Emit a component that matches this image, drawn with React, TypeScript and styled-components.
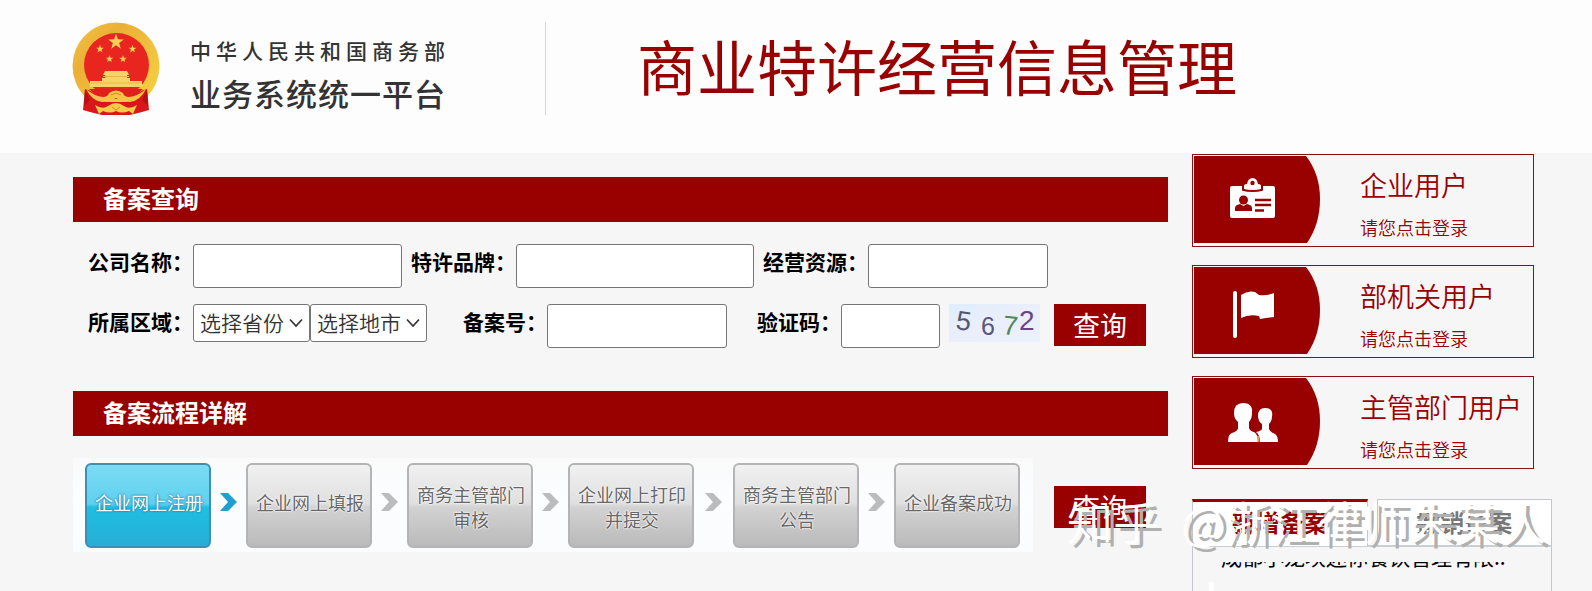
import React from "react";
import styled, { createGlobalStyle, css } from "styled-components";

const RED = "#990000";

const GlobalStyle = createGlobalStyle`
  *, *::before, *::after { box-sizing: border-box; }
  html, body { margin: 0; }
  body {
    background: #f6f6f6;
    color: #000;
    font-family: "Noto Sans CJK SC", "Noto Sans", sans-serif;
  }
  h1, h2, p { margin: 0; font-weight: 400; }
  button, input, select { font: inherit; margin: 0; }
  a { color: inherit; text-decoration: none; }
`;

const Page = styled.div`
  position: relative;
  display: flex;
  flex-direction: column;
  min-height: 100vh;
  overflow: hidden;
`;

const Header = styled.header`
  display: flex;
  align-items: flex-start;
  height: 153px;
  padding: 22px 40px 0 72px;
  background: #fdfdfd;
`;

const Brand = styled.div`
  display: flex;
  width: 474px;
  height: 93px;
  border-right: 1px solid #d4d4d4;
`;

const BrandText = styled.div`
  padding: 14px 0 0 30px;
  color: #333;
  white-space: nowrap;
`;

const Ministry = styled.p`
  font-size: 21px;
  line-height: 28px;
  letter-spacing: 5px;
  font-weight: 500;
`;

const Platform = styled.p`
  margin-top: 7px;
  font-size: 31px;
  line-height: 44px;
  letter-spacing: 1px;
  font-weight: 500;
`;

const SiteTitle = styled.h1`
  margin-left: 91px;
  color: ${RED};
  font-size: 60px;
  line-height: 86px;
  white-space: nowrap;
`;

const Content = styled.div`
  display: flex;
  flex: 1;
  gap: 24px;
  padding: 0 40px 0 73px;
`;

const Main = styled.main`
  flex: 1;
  min-width: 0;
  padding-top: 24px;
`;

const SectionTitle = styled.h2`
  padding: 0 0 3px 30px;
  background: ${RED};
  color: #fff;
  font-size: 24px;
  font-weight: 700;
  line-height: 42px;
`;

const Form = styled.form`
  display: flex;
  flex-direction: column;
  gap: 16px;
  padding: 22px 0 43px 15px;
`;

const FormRow = styled.div`
  display: flex;
  align-items: flex-start;
  gap: 9px;
`;

const Field = styled.div<{ $before?: number }>`
  display: flex;
  align-items: flex-start;
  margin-left: ${(p) => p.$before ?? 0}px;
`;

const Label = styled.label`
  font-size: 21px;
  font-weight: 700;
  line-height: 34px;
  white-space: nowrap;
`;

const control = css`
  border: 1px solid #767676;
  border-radius: 3px;
  background: #fff;
`;

const TextInput = styled.input<{ $width: number }>`
  ${control}
  width: ${(p) => p.$width}px;
  height: 44px;
  padding: 0 8px;
  font-size: 21px;
`;

const SelectBox = styled.span`
  position: relative;
  display: block;
  width: 117px;

  svg {
    position: absolute;
    top: 14px;
    right: 7px;
    pointer-events: none;
  }
`;

const Select = styled.select`
  ${control}
  appearance: none;
  width: 100%;
  height: 38px;
  padding: 0 24px 3px 6px;
  color: #333;
  font-size: 21px;
  font-weight: 350;
`;

const Captcha = styled.svg`
  display: block;
  flex: none;
`;

const QueryButton = styled.button`
  flex: none;
  width: 92px;
  height: 42px;
  padding: 0;
  border: 0;
  background: ${RED};
  color: #fff;
  font-size: 27px;
  line-height: 42px;
`;

const SubmitSlot = styled.div`
  margin-left: 5px;
`;

const Flow = styled.div`
  display: flex;
  align-items: flex-start;
  gap: 21px;
  padding-top: 22px;
`;

const FlowAction = styled.div`
  padding-top: 28px;
`;

const Steps = styled.ol`
  display: flex;
  align-items: center;
  margin: 0;
  padding: 5px 13px 5px 12px;
  height: 94px;
  list-style: none;
  background: linear-gradient(#fafafa, #fbfdff 40%, #fbfcfd);
`;

const Step = styled.li`
  display: flex;
  align-items: center;
`;

const StepBox = styled.span<{ $active?: boolean; $double?: boolean }>`
  display: flex;
  align-items: center;
  justify-content: center;
  width: 126px;
  height: 85px;
  padding: ${(p) => (p.$double ? "4px 0 0 2px" : "0 0 5px 2px")};
  border: 2px solid ${(p) => (p.$active ? "#3d8fb3" : "#b4b4b6")};
  border-radius: 6px;
  background: ${(p) =>
    p.$active
      ? "linear-gradient(#7cdcf4, #5fd0ef 48%, #1fbfe2 52%, #27add6)"
      : "linear-gradient(#f1f1f1, #dfdfdf 48%, #d2d2d2 52%, #bababa)"};
  color: ${(p) => (p.$active ? "#fff" : "#666")};
  font-size: 18px;
  line-height: 25px;
  text-align: center;
  white-space: pre-line;
  text-shadow: ${(p) =>
    p.$active
      ? "0 0 2px #1f7fa5, 0 0 2px #1f7fa5"
      : "0 0 2px #fff, 0 0 2px #fff, 0 0 1px #fff"};
`;

const StepArrow = styled.svg<{ $wide?: boolean }>`
  display: block;
  margin: ${(p) => (p.$wide ? "0 11px 6px 10px" : "0 9px 6px 8px")};
`;

const Sidebar = styled.aside`
  display: flex;
  flex-direction: column;
  flex: none;
  width: 360px;
  padding-top: 1px;
`;

const Logins = styled.div`
  display: flex;
  flex-direction: column;
  gap: 18px;
  margin-right: 18px;
`;

const LoginCard = styled.a`
  display: flex;
  align-items: flex-start;
  height: 93px;
  padding: 1px;
  border: 1px solid #8a1018;
  color: ${RED};
  white-space: nowrap;
`;

const LoginText = styled.span`
  display: flex;
  flex-direction: column;
  padding: 9px 0 0 40px;
  font-weight: 350;
`;

const LoginName = styled.span`
  font-size: 27px;
  line-height: 40px;
`;

const LoginHint = styled.span`
  margin-top: 9px;
  font-size: 18px;
  line-height: 26px;
`;

const News = styled.section`
  display: flex;
  flex: 1;
  flex-direction: column;
  margin-top: 30px;
`;

const Tabs = styled.div`
  display: flex;
`;

const Tab = styled.button<{ $active?: boolean }>`
  flex: 1;
  height: 48px;
  padding: ${(p) => (p.$active ? "0 0 4px" : "0 0 2px")};
  border: 1px solid #c3c7cb;
  border-top: ${(p) => (p.$active ? `3px solid ${RED}` : "1px solid #c3c7cb")};
  border-bottom: ${(p) => (p.$active ? "1px" : "2px")} solid #c9d0d5;
  background: #fff;
  color: ${(p) => (p.$active ? RED : "#777")};
  font-size: 24px;
  font-weight: 700;
  line-height: 36px;
`;

const TabGap = styled.span`
  width: 9px;
  border-bottom: 2px solid #c9d0d5;
`;

const NewsPanel = styled.div`
  flex: 1;
  padding: 15px 16px 0;
  border: 1px solid #c3c7cb;
  border-width: 0 1px;
`;

const Ticker = styled.div`
  display: flex;
  flex-direction: column;
  justify-content: flex-end;
  height: 12px;
  padding-left: 12px;
  overflow: hidden;
`;

const TickerItem = styled.a`
  flex: none;
  font-size: 21px;
  line-height: 35px;
  white-space: nowrap;
`;

const ScrollMark = styled.div`
  width: 5px;
  height: 9px;
  margin-top: 8px;
  background: #fff;
`;

const Watermark = styled.div`
  position: absolute;
  right: 46px;
  bottom: 41px;
  display: flex;
  gap: 22px;
  color: #fff;
  font-size: 46px;
  font-weight: 350;
  line-height: 60px;
  white-space: nowrap;
  text-shadow: 5px 4px 0 #b0b0b0;
  pointer-events: none;
`;

const starPoints = (cx: number, cy: number, r: number) =>
  Array.from({ length: 10 }, (_, i) => {
    const a = -Math.PI / 2 + (i * Math.PI) / 5;
    const d = i % 2 ? r * 0.4 : r;
    return `${(cx + d * Math.cos(a)).toFixed(2)},${(cy + d * Math.sin(a)).toFixed(2)}`;
  }).join(" ");

function Emblem() {
  return (
    <svg width="88" height="93" viewBox="0 0 88 93" role="img" aria-label="国徽">
      <defs>
        <linearGradient id="gold" x1="0" y1="0" x2="1" y2="1">
          <stop offset="0" stopColor="#f5c548" />
          <stop offset=".3" stopColor="#eab036" />
          <stop offset=".7" stopColor="#f3c640" />
          <stop offset="1" stopColor="#f7cf3a" />
        </linearGradient>
      </defs>
      <circle cx="44" cy="44" r="43.5" fill="url(#gold)" />
      <ellipse cx="44.5" cy="43" rx="32.5" ry="32" fill="#e8251f" />
      <path
        d="M13 67 Q21 69 27 75 L34 80 H54 L61 75 Q67 69 75 67 L77 88 L70 90 L58 93 H30 L18 90 L11 88 Z"
        fill="#d9171b"
      />
      <path d="M13 67 L18 78 L12 84 Z M75 67 L70 78 L76 84 Z" fill="#b80f14" />
      <g fill="#f5cf58">
        <polygon points={starPoints(44, 20, 8.2)} />
        <polygon points={starPoints(28, 27, 4.2)} />
        <polygon points={starPoints(60.5, 27, 4.2)} />
        <polygon points={starPoints(37.5, 37, 4)} />
        <polygon points={starPoints(51, 37, 4)} />
      </g>
      <path
        d="M33 49 H55 L57 53 H55 V56 H58 V59 H70 V65 H18 V59 H30 V56 H33 V53 H31 Z"
        fill="#f7d46a"
      />
      <path d="M31 54.5 H57 M19 61 H69" stroke="#edb63e" strokeWidth="1" />
      <path d="M17 67 H71 L60 77 H28 Z" fill="#df201d" />
      <path
        d="M14 67 Q22 74 31 75 Q36 75 37 71 Q44 66 51 71 Q52 75 57 75 Q66 74 74 67 Q68 79 58 80 Q50 80 44 76 Q38 80 30 80 Q20 79 14 67 Z"
        fill="#f3c545"
      />
      <path
        d="M23 83 Q31 88 36 84 Q44 78 52 84 Q57 88 65 83 L61 92 L57 89 Q50 92 44 89 Q38 92 31 89 L27 92 Z"
        fill="#f5cb4a"
      />
      <path d="M40 85 l4 3 4 -3 M39 73 l5 -2 5 2" stroke="#d98b22" fill="none" />
    </svg>
  );
}

function Chevron() {
  return (
    <svg width="14" height="10" viewBox="0 0 14 10" aria-hidden="true">
      <path d="M1 1.5 L7 8 L13 1.5" fill="none" stroke="#333" strokeWidth="1.7" />
    </svg>
  );
}

function CaptchaImage() {
  return (
    <Captcha width="91" height="38" viewBox="0 0 91 38" role="img" aria-label="验证码图片">
      <defs>
        <linearGradient id="captcha" x1="0" y1="0" x2="1" y2="1">
          <stop offset="0" stopColor="#dfeefc" />
          <stop offset=".5" stopColor="#ebeefb" />
          <stop offset="1" stopColor="#eaf1fd" />
        </linearGradient>
      </defs>
      <rect width="91" height="38" fill="url(#captcha)" />
      <g fontFamily="'Liberation Sans', sans-serif" fontSize="27">
        <text transform="translate(6 25) rotate(8)" fill="#55566f">5</text>
        <text x="32" y="31" fontSize="25" fill="#5b5578">6</text>
        <text transform="translate(53 30) rotate(6)" fill="#4f8a5c">7</text>
        <text x="70" y="26" fontSize="28" fill="#6a4585">2</text>
      </g>
    </Captcha>
  );
}

const badgeIcons: Record<string, React.ReactNode> = {
  card: (
    <>
      <rect x="36" y="30" width="45" height="32" rx="2" fill="#fff" />
      <path
        d="M50 33 V30 Q50 28 53 28 Q54 22 58.5 22 Q63 22 64 28 Q67 28 67 30 V33 Q64 34 58.5 34 Q53 34 50 33 Z"
        fill="#fff"
        stroke={RED}
        strokeWidth="4"
        paintOrder="stroke"
      />
      <circle cx="58.5" cy="27" r="2.2" fill={RED} />
      <circle cx="49.5" cy="44" r="4.5" fill={RED} />
      <path d="M41 55 V52 Q41 49 46 48 L49.5 50 L53 48 Q58 49 58 52 V55 Z" fill={RED} />
      <path d="M61 44 H77 M61 49 H77 M61 54.5 H70" stroke={RED} strokeWidth="2.5" />
    </>
  ),
  flag: (
    <>
      <rect x="39" y="24" width="4" height="47" rx="2" fill="#fff" />
      <path
        d="M47 28 Q54 23 61 25 L65 28 Q72 29 80 26 V50 Q73 51 66 52 L65 49 Q55 47 47 51 Z"
        fill="#fff"
      />
    </>
  ),
  users: (
    <>
      <path
        d="M49 25 C55 25 59 28 58 35 Q58 41 55 44 V50 Q56 53 60 54 Q64 56 64 64 H34 Q34 56 38 55 Q44 53 44 50 V44 Q40 41 40 35 Q40 25 49 25 Z"
        fill="#fff"
      />
      <path
        d="M71 30 C77 30 79 33 78 39 Q78 43 75 46 V51 Q76 54 81 56 Q84 58 84 64 H66 Q66 57 62 54 Q67 53 68 51 V46 Q64 43 64 38 Q64 30 71 30 Z"
        fill="#fff"
      />
      <path d="M64.5 58 V64" stroke="#e0a050" strokeWidth="2" />
    </>
  ),
};

function Badge({ icon }: { icon: string }) {
  return (
    <svg width="126" height="87" viewBox="0 0 126 87" aria-hidden="true">
      <path d="M0 0 H112 Q126 18 126 43 Q126 68 113 87 H0 Z" fill={RED} />
      {badgeIcons[icon]}
    </svg>
  );
}

const steps = [
  { text: "企业网上注册" },
  { text: "企业网上填报" },
  { text: "商务主管部门\n审核", double: true },
  { text: "企业网上打印\n并提交", double: true, wide: true },
  { text: "商务主管部门\n公告", double: true },
  { text: "企业备案成功" },
];

const logins = [
  { icon: "card", name: "企业用户" },
  { icon: "flag", name: "部机关用户" },
  { icon: "users", name: "主管部门用户" },
];

export default function App() {
  return (
    <>
      <GlobalStyle />
      <Page>
        <Header>
          <Brand>
            <Emblem />
            <BrandText>
              <Ministry>中华人民共和国商务部</Ministry>
              <Platform>业务系统统一平台</Platform>
            </BrandText>
          </Brand>
          <SiteTitle>商业特许经营信息管理</SiteTitle>
        </Header>

        <Content>
          <Main>
            <SectionTitle>备案查询</SectionTitle>
            <Form onSubmit={(e) => e.preventDefault()}>
              <FormRow>
                <Field>
                  <Label htmlFor="company">公司名称：</Label>
                  <TextInput id="company" $width={209} />
                </Field>
                <Field>
                  <Label htmlFor="brand">特许品牌：</Label>
                  <TextInput id="brand" $width={238} />
                </Field>
                <Field>
                  <Label htmlFor="resource">经营资源：</Label>
                  <TextInput id="resource" $width={180} />
                </Field>
              </FormRow>
              <FormRow>
                <Field>
                  <Label htmlFor="province">所属区域：</Label>
                  <SelectBox>
                    <Select id="province">
                      <option>选择省份</option>
                    </Select>
                    <Chevron />
                  </SelectBox>
                  <SelectBox>
                    <Select aria-label="选择地市">
                      <option>选择地市</option>
                    </Select>
                    <Chevron />
                  </SelectBox>
                </Field>
                <Field $before={27}>
                  <Label htmlFor="record">备案号：</Label>
                  <TextInput id="record" $width={180} />
                </Field>
                <Field $before={21}>
                  <Label htmlFor="code">验证码：</Label>
                  <TextInput id="code" $width={99} />
                </Field>
                <CaptchaImage />
                <SubmitSlot>
                  <QueryButton type="submit">查询</QueryButton>
                </SubmitSlot>
              </FormRow>
            </Form>

            <SectionTitle>备案流程详解</SectionTitle>
            <Flow>
              <Steps>
                {steps.map((step, i) => (
                  <Step key={step.text}>
                    <StepBox $active={i === 0} $double={step.double}>
                      {step.text}
                    </StepBox>
                    {i < steps.length - 1 && (
                      <StepArrow
                        $wide={step.wide}
                        width="18"
                        height="18"
                        viewBox="0 0 18 18"
                        aria-hidden="true"
                      >
                        <path
                          d="M1 0 H9 L18 9 L9 18 H1 L9 9 Z"
                          fill={i === 0 ? "#1e9fd0" : "#bcbcbc"}
                        />
                      </StepArrow>
                    )}
                  </Step>
                ))}
              </Steps>
              <FlowAction>
                <QueryButton type="button">查询</QueryButton>
              </FlowAction>
            </Flow>
          </Main>

          <Sidebar>
            <Logins>
              {logins.map((l) => (
                <LoginCard key={l.name} href="#">
                  <Badge icon={l.icon} />
                  <LoginText>
                    <LoginName>{l.name}</LoginName>
                    <LoginHint>请您点击登录</LoginHint>
                  </LoginText>
                </LoginCard>
              ))}
            </Logins>
            <News>
              <Tabs>
                <Tab $active>新增备案</Tab>
                <TabGap />
                <Tab>撤销备案</Tab>
              </Tabs>
              <NewsPanel>
                <Ticker>
                  <TickerItem href="#">成都小龙坎迷你餐饮管理有限..</TickerItem>
                </Ticker>
                <ScrollMark />
              </NewsPanel>
            </News>
          </Sidebar>
        </Content>
        <Watermark>
          <span>知乎</span>
          <span>@浙江律师朱某人</span>
        </Watermark>
      </Page>
    </>
  );
}
